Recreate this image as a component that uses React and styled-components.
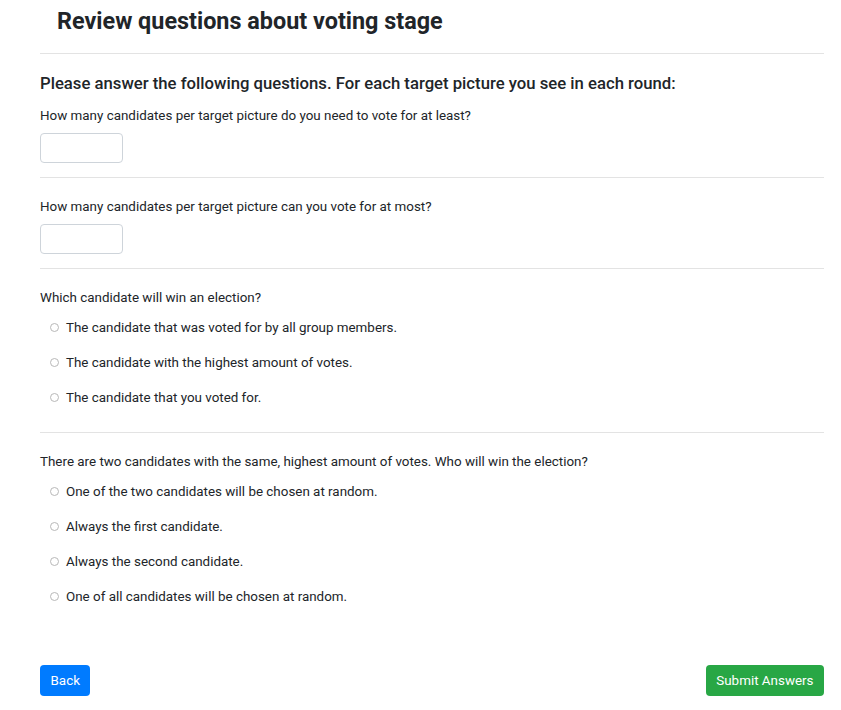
import styled, { createGlobalStyle } from "styled-components"

const GlobalStyle = createGlobalStyle`
body {
    margin: 0;
    background: #ffffff;
    font-family: Roboto, "Liberation Sans", Arial, sans-serif;
    color: #212529;
}
`

const questions = [
    {
        text: "Which candidate will win an election?",
        options: [
            "The candidate that was voted for by all group members.",
            "The candidate with the highest amount of votes.",
            "The candidate that you voted for.",
        ],
    },
    {
        text: "There are two candidates with the same, highest amount of votes. Who will win the election?",
        options: [
            "One of the two candidates will be chosen at random.",
            "Always the first candidate.",
            "Always the second candidate.",
            "One of all candidates will be chosen at random.",
        ],
    },
]

export default function App() {
    return (
        <Page>
            <GlobalStyle />
            <Title>Review questions about voting stage</Title>
            <Divider $top={17} $bottom={19} />
            <Intro>Please answer the following questions. For each target picture you see in each round:</Intro>
            <Question $top={10}>How many candidates per target picture do you need to vote for at least?</Question>
            <NumberInput type="text" />
            <Divider $top={14} $bottom={18} />
            <Question>How many candidates per target picture can you vote for at most?</Question>
            <NumberInput type="text" />
            {questions.map((q, i) => (
                <div key={i}>
                    <Divider $top={i === 0 ? 14 : 24} $bottom={18} />
                    <Question>{q.text}</Question>
                    <Options>
                        {q.options.map((o) => (
                            <Option key={o}>
                                <Radio />
                                <span>{o}</span>
                            </Option>
                        ))}
                    </Options>
                </div>
            ))}
            <ButtonRow>
                <Button $color="#007bff">Back</Button>
                <Button $color="#28a745">Submit Answers</Button>
            </ButtonRow>
        </Page>
    )
}

const Page = styled.div`
width: 784px;
padding: 7px 0 14px 40px;
`
const Title = styled.h2`
margin: 0 0 0 17px;
font-size: 23.4px;
line-height: 29px;
font-weight: 700;
color: #212529;
`
const Divider = styled.hr`
border: 0;
border-top: 1px solid #e3e3e3;
margin: ${p => p.$top}px 0 ${p => p.$bottom}px 0;
`
const Intro = styled.h5`
margin: 0;
font-size: 16.7px;
line-height: 22px;
font-weight: 500;
`
const Question = styled.div`
margin-top: ${p => p.$top || 0}px;
font-size: 13.4px;
line-height: 21px;
`
const NumberInput = styled.input`
display: block;
box-sizing: border-box;
width: 83px;
height: 30px;
margin-top: 7px;
border: 1px solid #ced4da;
border-radius: 4px;
background: #fff;
`
const Options = styled.div`
display: flex;
flex-direction: column;
gap: 14px;
margin-top: 9px;
padding-left: 10px;
`
const Option = styled.label`
display: flex;
align-items: center;
gap: 7px;
font-size: 13.4px;
line-height: 21px;
`
const Radio = styled.span`
box-sizing: border-box;
width: 9px;
height: 9px;
border: 1px solid #b8b8b8;
border-radius: 50%;
background: #fff;
`
const ButtonRow = styled.div`
display: flex;
justify-content: space-between;
margin-top: 58px;
`
const Button = styled.button`
height: 31px;
padding: 0 10.5px;
border: 0;
border-radius: 4px;
background: ${p => p.$color};
color: #ffffff;
font-family: Roboto, "Liberation Sans", Arial, sans-serif;
font-size: 13.4px;
`
